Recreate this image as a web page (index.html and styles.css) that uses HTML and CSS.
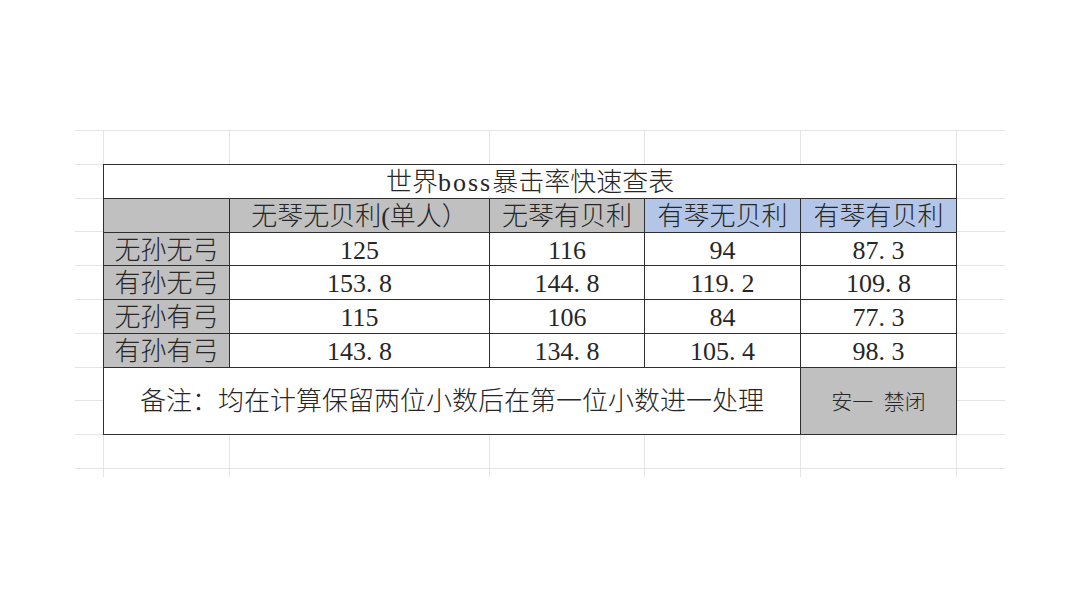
FILE: index.html
```html
<!DOCTYPE html>
<html lang="zh">
<head>
<meta charset="utf-8">
<title>世界boss暴击率快速查表</title>
<link rel="stylesheet" href="styles.css">
</head>
<body>
<div class="sheet">
  <table class="chart">
    <colgroup>
      <col class="c0"><col class="c1"><col class="c2"><col class="c3"><col class="c4">
    </colgroup>
    <tr class="r-title"><td colspan="5">世界<span class="latin">boss</span>暴击率快速查表</td></tr>
    <tr class="r-head">
      <td class="gray"></td>
      <td class="gray">无琴无贝利(单人）</td>
      <td class="gray">无琴有贝利</td>
      <td class="blue">有琴无贝利</td>
      <td class="blue">有琴有贝利</td>
    </tr>
    <tr class="r-data r-first">
      <td class="gray">无孙无弓</td><td>125</td><td>116</td><td>94</td><td>87<span class="dot">.</span>3</td>
    </tr>
    <tr class="r-data">
      <td class="gray">有孙无弓</td><td>153<span class="dot">.</span>8</td><td>144<span class="dot">.</span>8</td><td>119<span class="dot">.</span>2</td><td>109<span class="dot">.</span>8</td>
    </tr>
    <tr class="r-data">
      <td class="gray">无孙有弓</td><td>115</td><td>106</td><td>84</td><td>77<span class="dot">.</span>3</td>
    </tr>
    <tr class="r-data">
      <td class="gray">有孙有弓</td><td>143<span class="dot">.</span>8</td><td>134<span class="dot">.</span>8</td><td>105<span class="dot">.</span>4</td><td>98<span class="dot">.</span>3</td>
    </tr>
    <tr class="r-foot">
      <td colspan="4" class="note">备注：均在计算保留两位小数后在第一位小数进一处理</td>
      <td class="gray sign">安一&nbsp; 禁闭</td>
    </tr>
  </table>
</div>
</body>
</html>
```
FILE: styles.css
```css
html, body {
  margin: 0;
  padding: 0;
  background: #ffffff;
}

body {
  width: 1080px;
  height: 606px;
  overflow: hidden;
  padding-top: 130px;
  box-sizing: border-box;
  font-family: "Liberation Serif", "Noto Sans CJK SC", serif;
  color: #262626;
}

.sheet {
  margin-left: 75px;
  width: 930px;
  height: 347px;
  padding: 34px 0 0 28px;
  box-sizing: border-box;
  background-color: #ffffff;
  background-image:
    linear-gradient(#e4e4e4, #e4e4e4),
    linear-gradient(#e4e4e4, #e4e4e4),
    linear-gradient(#e4e4e4, #e4e4e4),
    linear-gradient(#e4e4e4, #e4e4e4),
    linear-gradient(#e4e4e4, #e4e4e4),
    linear-gradient(#e4e4e4, #e4e4e4),
    repeating-linear-gradient(to bottom, #e4e4e4 0, #e4e4e4 1px, transparent 1px, transparent 33.8px);
  background-repeat: no-repeat;
  background-size: 1px 100%, 1px 100%, 1px 100%, 1px 100%, 1px 100%, 1px 100%, 100% 100%;
  background-position: 28px 0, 154px 0, 414px 0, 569px 0, 725px 0, 881px 0, 0 0;
}

.chart {
  border-collapse: collapse;
  table-layout: fixed;
  width: 853px;
  background: #ffffff;
  font-size: 26px;
  font-weight: 300;
  line-height: 1;
}

.c0 { width: 126px; }
.c1 { width: 260px; }
.c2 { width: 155px; }
.c3 { width: 156px; }
.c4 { width: 156px; }

.chart td {
  border: 1px solid #2e2e2e;
  padding: 3px 0 0;
  text-align: center;
  vertical-align: middle;
  white-space: nowrap;
  overflow: hidden;
}

.r-title td { height: 30px; }
.r-head td { height: 30px; }
.r-data td { height: 30px; }
.r-data.r-first td { height: 29px; }
.r-foot td { height: 64px; padding-top: 2px; }

.latin { letter-spacing: 2px; }

.gray { background: #c0c0c0; }
.blue { background: #b4c6e7; }

.dot { margin-right: 0.25em; }

.sign {
  font-size: 21px;
}
```
